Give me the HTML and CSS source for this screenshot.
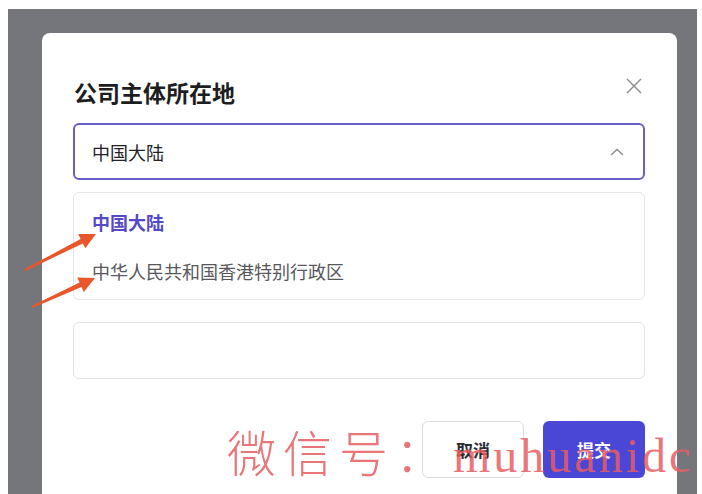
FILE: index.html
```html
<!DOCTYPE html>
<html lang="zh-CN">
<head>
    <meta charset="UTF-8">
    <meta name="viewport" content="width=device-width, initial-scale=1.0">
    <title>公司主体所在地</title>
    <link rel="stylesheet" href="styles.css">
</head>
<body>

    <div class="backdrop">
        <div class="modal">
            <div class="modal-header">
                <h2 class="modal-title">公司主体所在地</h2>
                <button class="close-btn" aria-label="关闭">
                    <svg width="16" height="16" viewBox="0 0 16 16">
                        <path d="M1 1 L15 15 M15 1 L1 15" stroke="#8a8a8e" stroke-width="1.4" fill="none"/>
                    </svg>
                </button>
            </div>

            <div class="select is-open">
                <span class="select-value">中国大陆</span>
                <svg class="chevron" width="14" height="8" viewBox="0 0 14 8">
                    <path d="M1 7 L7 1.5 L13 7" stroke="#8a8a8e" stroke-width="1.4" fill="none"/>
                </svg>
            </div>

            <ul class="dropdown">
                <li class="option selected">中国大陆</li>
                <li class="option">中华人民共和国香港特别行政区</li>
            </ul>

            <div class="text-field"></div>

            <div class="actions">
                <button class="btn btn-cancel">取消</button>
                <button class="btn btn-primary">提交</button>
            </div>
        </div>
    </div>

    <!-- flèches d'annotation -->
    <svg class="arrows" width="702" height="494" viewBox="0 0 702 494">
        <polygon points="25.5,270.9 82.8,243.4 85.3,248.3 96,234 78.1,234.1 80.6,239 24.5,269.1" fill="#e8572a"/>
        <polygon points="32.4,307.9 81.5,287 83.8,292 95,278 77.2,277.4 79.5,282.4 31.6,306.1" fill="#e8572a"/>
    </svg>

    <div class="watermark"><span class="wm-cjk">微信号：</span><span class="wm-latin">muhuanidc</span></div>

</body>
</html>
```

FILE: styles.css
```css
* {
    box-sizing: border-box;
}

html, body {
    margin: 0;
    height: 100%;
}

body {
    background: #ffffff;
    font-family: "Noto Sans CJK SC", "Noto Sans", sans-serif;
    overflow: hidden;
    position: relative;
}

.backdrop {
    margin: 9px 5px 0 8px;
    height: calc(100% - 9px);
    background: #75767b;
    padding: 24px 20px 0 34px;
}

.modal {
    background: #ffffff;
    border-radius: 8px 8px 0 0;
    height: 100%;
    padding: 44px 32px 0 31px;
}

.modal-header {
    display: flex;
    align-items: center;
    justify-content: space-between;
    height: 30px;
}

.modal-title {
    margin: 0;
    font-size: 23px;
    font-weight: 600;
    color: #1e1e22;
    line-height: 30px;
    padding-left: 1px;
}

.close-btn {
    background: none;
    border: none;
    padding: 0;
    margin: -12px 3px 0 0;
    width: 16px;
    height: 16px;
    cursor: pointer;
}

.select {
    margin-top: 16px;
    height: 57px;
    border: 2px solid #6a5fc6;
    border-radius: 6px;
    display: flex;
    align-items: center;
    justify-content: space-between;
    padding: 0 19px 0 17px;
}

.select-value {
    font-size: 18px;
    color: #222226;
}

.chevron {
    margin-top: 1px;
}

.dropdown {
    list-style: none;
    margin: 12px 0 0 0;
    padding: 4px 0;
    border: 1px solid #e6e6ea;
    border-radius: 6px;
}

.option {
    height: 49px;
    display: flex;
    align-items: center;
    padding-left: 18px;
    font-size: 18px;
    color: #58585c;
}

.option.selected {
    color: #5549c6;
    font-weight: 700;
}

.text-field {
    margin-top: 22px;
    height: 57px;
    border: 1px solid #e3e3e8;
    border-radius: 6px;
}

.actions {
    margin-top: 42px;
    display: flex;
    justify-content: flex-end;
    gap: 19px;
}

.btn {
    width: 102px;
    height: 57px;
    border-radius: 6px;
    font-family: "Noto Sans CJK SC", sans-serif;
    font-size: 17px;
    font-weight: 700;
    cursor: pointer;
}

.btn-cancel {
    background: #ffffff;
    border: 1px solid #dcdce0;
    color: #2c2c30;
}

.btn-primary {
    background: #4b47d6;
    border: none;
    color: #ffffff;
}

.arrows {
    position: absolute;
    top: 0;
    left: 0;
    pointer-events: none;
}

.watermark {
    position: absolute;
    left: 227px;
    top: 426px;
    color: rgba(232, 92, 96, 0.85);
    white-space: nowrap;
    pointer-events: none;
    line-height: 1;
}

.wm-cjk {
    font-family: "Noto Sans CJK SC", sans-serif;
    font-weight: 300;
    font-size: 49px;
    letter-spacing: 7px;
}

.wm-latin {
    font-family: "Liberation Serif", serif;
    font-size: 48px;
    letter-spacing: 3px;
    margin-left: 2px;
}
```
